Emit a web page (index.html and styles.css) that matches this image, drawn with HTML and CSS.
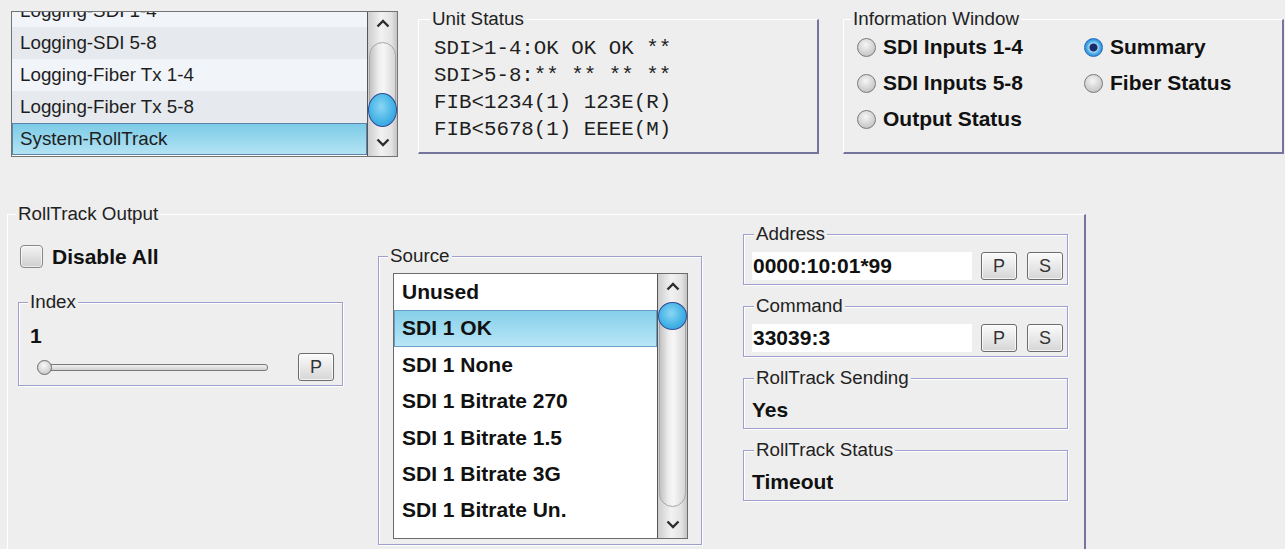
FILE: index.html
```html
<!DOCTYPE html>
<html lang="en">
<head>
<meta charset="utf-8">
<title>RollTrack</title>
<link rel="stylesheet" href="styles.css">
</head>
<body>
<div class="app">
  <div class="top-row">
    <div class="listbox nav-list">
      <div class="list-items">
        <div class="nav-item light first">Logging-SDI 1-4</div>
        <div class="nav-item shade">Logging-SDI 5-8</div>
        <div class="nav-item light">Logging-Fiber Tx 1-4</div>
        <div class="nav-item shade">Logging-Fiber Tx 5-8</div>
        <div class="nav-item selected">System-RollTrack</div>
      </div>
      <div class="scrollbar sb-nav">
        <div class="sb-up"><svg width="14" height="9" viewBox="0 0 14 9"><polyline points="1.5,7.5 7,2 12.5,7.5" fill="none" stroke="#2e2e2e" stroke-width="2.4"/></svg></div>
        <div class="sb-track"><div class="sb-groove"></div><div class="sb-thumb"></div></div>
        <div class="sb-down"><svg width="14" height="9" viewBox="0 0 14 9"><polyline points="1.5,1.5 7,7 12.5,1.5" fill="none" stroke="#2e2e2e" stroke-width="2.4"/></svg></div>
      </div>
    </div>

    <fieldset class="panel unit-status">
      <legend>Unit Status</legend>
      <pre class="status-text">SDI&gt;1-4:OK OK OK **
SDI&gt;5-8:** ** ** **
FIB&lt;1234(1) 123E(R)
FIB&lt;5678(1) EEEE(M)</pre>
    </fieldset>

    <fieldset class="panel info-window">
      <legend>Information Window</legend>
      <div class="radio-grid">
        <label class="radio-item"><span class="radio"></span>SDI Inputs 1-4</label>
        <label class="radio-item"><span class="radio on"></span>Summary</label>
        <label class="radio-item"><span class="radio"></span>SDI Inputs 5-8</label>
        <label class="radio-item"><span class="radio"></span>Fiber Status</label>
        <label class="radio-item"><span class="radio"></span>Output Status</label>
      </div>
    </fieldset>
  </div>

  <fieldset class="panel rolltrack">
    <legend>RollTrack Output</legend>
    <div class="rt-cols">
      <div class="col-left">
        <label class="check-row"><span class="checkbox"></span>Disable All</label>
        <fieldset class="group index-group">
          <legend>Index</legend>
          <div class="value-line">1</div>
          <div class="slider-row">
            <div class="slider"><div class="slider-track"></div><div class="slider-knob"></div></div>
            <div class="btn">P</div>
          </div>
        </fieldset>
      </div>

      <div class="col-source">
        <fieldset class="group source-group">
          <legend>Source</legend>
          <div class="listbox source-list">
            <div class="list-items">
              <div class="src-item">Unused</div>
              <div class="src-item selected">SDI 1 OK</div>
              <div class="src-item">SDI 1 None</div>
              <div class="src-item">SDI 1 Bitrate 270</div>
              <div class="src-item">SDI 1 Bitrate 1.5</div>
              <div class="src-item">SDI 1 Bitrate 3G</div>
              <div class="src-item">SDI 1 Bitrate Un.</div>
            </div>
            <div class="scrollbar sb-source">
              <div class="sb-up"><svg width="14" height="9" viewBox="0 0 14 9"><polyline points="1.5,7.5 7,2 12.5,7.5" fill="none" stroke="#2e2e2e" stroke-width="2.4"/></svg></div>
              <div class="sb-track"><div class="sb-groove"></div><div class="sb-thumb"></div></div>
              <div class="sb-down"><svg width="14" height="9" viewBox="0 0 14 9"><polyline points="1.5,1.5 7,7 12.5,1.5" fill="none" stroke="#2e2e2e" stroke-width="2.4"/></svg></div>
            </div>
          </div>
        </fieldset>
      </div>

      <div class="col-info">
        <fieldset class="group field-group">
          <legend>Address</legend>
          <div class="field-row">
            <div class="text-field">0000:10:01*99</div>
            <div class="btn btn-p">P</div>
            <div class="btn btn-s">S</div>
          </div>
        </fieldset>
        <fieldset class="group field-group">
          <legend>Command</legend>
          <div class="field-row">
            <div class="text-field">33039:3</div>
            <div class="btn btn-p">P</div>
            <div class="btn btn-s">S</div>
          </div>
        </fieldset>
        <fieldset class="group field-group">
          <legend>RollTrack Sending</legend>
          <div class="value-text">Yes</div>
        </fieldset>
        <fieldset class="group field-group">
          <legend>RollTrack Status</legend>
          <div class="value-text">Timeout</div>
        </fieldset>
      </div>
    </div>
  </fieldset>
</div>
</body>
</html>
```
FILE: styles.css
```css
* { box-sizing: border-box; }

html, body {
  margin: 0;
  height: 100%;
}

body {
  background: #eeeeee;
  font-family: "Liberation Sans", Arial, sans-serif;
  color: #1c1c1c;
  overflow: hidden;
}

.app {
  width: 1285px;
  padding: 10px 0 0 7px;
}

/* ---------- shared widgets ---------- */

fieldset {
  margin: 0;
  padding: 0;
  min-width: 0;
}

legend {
  font-size: 18.8px;
  line-height: 18px;
  padding: 0 2px;
  color: #222;
  background: #eeeeee;
}

.panel {
  border-top: 1px solid #ffffff;
  border-left: 1px solid #ffffff;
  border-right: 2px solid #74749c;
  border-bottom: 2px solid #74749c;
}

.group {
  border: 1px solid #9e9ecf;
  box-shadow: 1px 1px 0 #ffffff, inset 1px 1px 0 #ffffff;
}

.listbox {
  display: flex;
  border: 1px solid #737373;
  background: #ffffff;
}

.list-items {
  flex: 1;
  overflow: hidden;
}

.scrollbar {
  width: 30px;
  display: flex;
  flex-direction: column;
  border-left: 1px solid #555555;
  background: linear-gradient(to right, #cdcdcd, #f2f2f2 45%, #e4e4e4 80%, #c4c4c4);
}

.sb-up, .sb-down {
  display: flex;
  align-items: center;
  justify-content: center;
}

.sb-track {
  flex: 1;
  position: relative;
}

.sb-groove {
  position: absolute;
  left: 1px;
  right: 1px;
  border: 1px solid #a6a6a6;
  border-radius: 14px;
  background: linear-gradient(to right, #c2c2c2, #eeeeee 35%, #f6f6f6 55%, #d6d6d6);
}

.sb-thumb {
  position: absolute;
  left: 0;
  width: 29px;
  border-radius: 50%;
  border: 1.5px solid #2d4c9c;
  background: radial-gradient(ellipse at 45% 40%, #8bd6f4, #46b4e6 55%, #2c93d6);
}

.btn {
  width: 36px;
  height: 28px;
  display: flex;
  align-items: center;
  justify-content: center;
  border: 1px solid #6c6c6c;
  border-radius: 3px;
  background: linear-gradient(#fbfbfb, #d6d6d6);
  box-shadow: inset 0 0 0 1px rgba(255, 255, 255, 0.75);
  font-size: 18px;
  color: #333333;
}

/* ---------- top row ---------- */

.top-row {
  display: flex;
  align-items: flex-start;
}

.nav-list {
  margin: 1px 0 0 4px;
  width: 387px;
  height: 146px;
}

.nav-item {
  height: 32px;
  line-height: 32px;
  padding-left: 8px;
  font-size: 18.8px;
  color: #1e1e1e;
  white-space: nowrap;
}

.nav-item.first { margin-top: -17px; }
.nav-item.light { background: #f1f4f8; }
.nav-item.shade { background: #e6e9ed; }

.nav-item.selected {
  line-height: 30px;
  border: 1px solid #5d83a8;
  padding-left: 7px;
  background: linear-gradient(#7ccbe7, #b3e3f3);
}

.sb-nav .sb-up { height: 22px; }
.sb-nav .sb-down { height: 28px; }
.sb-nav .sb-groove { top: 8px; bottom: 4px; }
.sb-nav .sb-thumb { bottom: 1px; height: 34px; }

.unit-status {
  margin-left: 20px;
  width: 401px;
  height: 144px;
  padding: 7px 0 0 15px;
}

.unit-status legend { margin-left: -4px; }

.status-text {
  margin: 0;
  font-family: "Liberation Mono", "DejaVu Sans Mono", monospace;
  font-size: 20.8px;
  line-height: 27px;
  color: #1e1e1e;
}

.info-window {
  margin-left: 24px;
  width: 441px;
  height: 144px;
  padding: 1px 0 0 13px;
}

.info-window legend { margin-left: -6px; }

.radio-grid {
  display: grid;
  grid-template-columns: 227px auto;
  grid-auto-rows: 36px;
}

.radio-item {
  display: flex;
  align-items: center;
  gap: 7px;
  font-weight: bold;
  font-size: 21px;
  color: #111111;
}

.radio {
  width: 19px;
  height: 19px;
  border-radius: 50%;
  border: 1px solid #7a7a7a;
  background: radial-gradient(circle at 45% 35%, #f6f6f6, #cdcdcd 65%, #adadad);
}

.radio.on {
  border-color: #1f6cc0;
  background: radial-gradient(circle, #1b2a68 0 3.5px, #9fd6f5 4.5px, #4eaee8 6.5px, #2a86d4 9px);
}

/* ---------- RollTrack output ---------- */

.rolltrack {
  margin-top: 48px;
  width: 1079px;
  height: 360px;
  border-bottom: none;
  padding: 0 16px 0 10px;
}

.rolltrack legend { margin-left: -2px; }

.rt-cols {
  display: flex;
  align-items: flex-start;
}

.col-left { width: 325px; }

.check-row {
  margin: 22px 0 0 2px;
  height: 23px;
  display: flex;
  align-items: center;
  gap: 9px;
  font-weight: bold;
  font-size: 21px;
  color: #111111;
}

.checkbox {
  width: 23px;
  height: 23px;
  border: 1px solid #888888;
  border-radius: 4px;
  background: linear-gradient(#f3f3f3, #cfcfcf);
  box-shadow: inset 0 0 0 1px rgba(255, 255, 255, 0.6);
}

.index-group {
  margin-top: 25px;
  width: 325px;
  padding: 13px 0 4px 11px;
}

.index-group legend { margin-left: -2px; }

.value-line {
  font-weight: bold;
  font-size: 21px;
  line-height: 24px;
  color: #111111;
}

.slider-row {
  margin-top: 5px;
  display: flex;
  align-items: center;
  height: 28px;
}

.slider {
  position: relative;
  margin-left: 7px;
  width: 231px;
  height: 15px;
}

.slider-track {
  position: absolute;
  left: 8px;
  right: 0;
  top: 4px;
  height: 7px;
  border: 1px solid #7a7a7a;
  border-radius: 3px;
  background: linear-gradient(#f2f2f2, #cfcfcf);
}

.slider-knob {
  position: absolute;
  left: 0;
  top: 0;
  width: 15px;
  height: 15px;
  border-radius: 50%;
  border: 1px solid #6a6a6a;
  background: radial-gradient(circle at 45% 35%, #f8f8f8, #cfcfcf 70%, #b0b0b0);
}

.slider-row .btn { margin-left: 30px; }

.col-source {
  margin: 24px 0 0 35px;
  width: 324px;
}

.source-group {
  width: 324px;
  padding: 8px 13px 5px 14px;
}

.source-group legend { margin-left: -5px; }

.source-list {
  height: 266px;
  border-color: #6b6b6b;
}

.src-item {
  height: 36.4px;
  line-height: 36.4px;
  padding-left: 8px;
  font-weight: bold;
  font-size: 21px;
  color: #111111;
  white-space: nowrap;
}

.src-item.selected {
  line-height: 34.4px;
  border: 1px solid #6a9cc8;
  padding-left: 7px;
  background: linear-gradient(#86d0ea, #b8e6f6);
}

.sb-source .sb-up { height: 24px; }
.sb-source .sb-down { height: 28px; }
.sb-source .sb-groove { top: 4px; bottom: 3px; }
.sb-source .sb-thumb { top: 4px; height: 28px; }

.col-info {
  margin: 2px 0 0 41px;
  width: 325px;
  display: flex;
  flex-direction: column;
  gap: 12px;
}

.field-group {
  height: 60px;
  padding: 9px 3px 0 8px;
}

.field-group legend { margin-left: 2px; }

.field-row {
  display: flex;
  align-items: center;
}

.text-field {
  width: 220px;
  height: 28px;
  line-height: 28px;
  padding-left: 1px;
  background: #ffffff;
  font-weight: bold;
  font-size: 21px;
  color: #111111;
}

.btn-p { margin-left: 9px; }
.btn-s { margin-left: 10px; }

.value-text {
  line-height: 28px;
  font-weight: bold;
  font-size: 21px;
  color: #111111;
}
```
